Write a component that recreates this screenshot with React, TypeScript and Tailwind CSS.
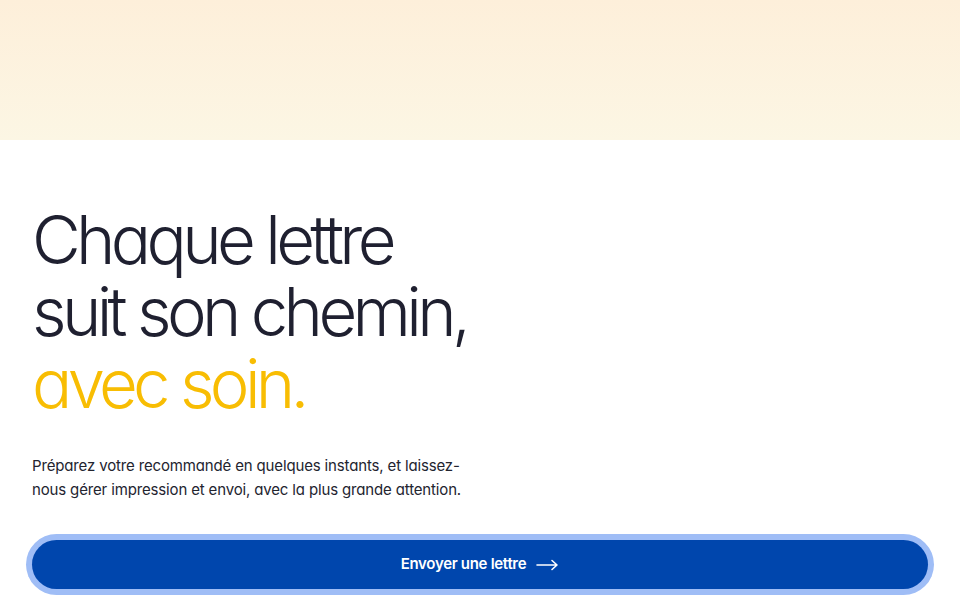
import React from "react";

export default function App() {
  return (
    <div className="w-[960px] h-[600px] overflow-hidden bg-white font-['Inter',sans-serif]">
      <div className="h-[140px] w-full bg-gradient-to-b from-[#fdefda] to-[#fcf6e4]" />
      <div className="px-[32px] pt-[64px]">
        <h1 className="text-[67px] leading-[72px] font-light tracking-[-0.07em] text-[#1f2030] [font-feature-settings:'cv11']">
          Chaque lettre
          <br />
          suit son chemin,
          <br />
          <span className="text-[#f8bd03]">avec soin.</span>
        </h1>
        <p className="mt-[34px] text-[15px] leading-[24px] text-[#23242f] tracking-[-0.01em] [font-feature-settings:'cv11']">
          Préparez votre recommandé en quelques instants, et laissez-
          <br />
          nous gérer impression et envoi, avec la plus grande attention.
        </p>
      </div>
      <div className="px-[26px] pt-[32px]">
        <div className="rounded-full bg-[#9fbdf6] p-[6px]">
          <button className="flex h-[49px] w-full items-center justify-center gap-[10px] rounded-full bg-[#0046ad] text-[15px] font-semibold tracking-[-0.02em] text-white">
            Envoyer une lettre
            <svg width="23" height="12" viewBox="0 0 23 12" fill="none">
              <path d="M1 6h20M16 1.5L21 6l-5 4.5" stroke="white" strokeWidth="1.6" strokeLinecap="round" strokeLinejoin="round" />
            </svg>
          </button>
        </div>
      </div>
    </div>
  );
}
